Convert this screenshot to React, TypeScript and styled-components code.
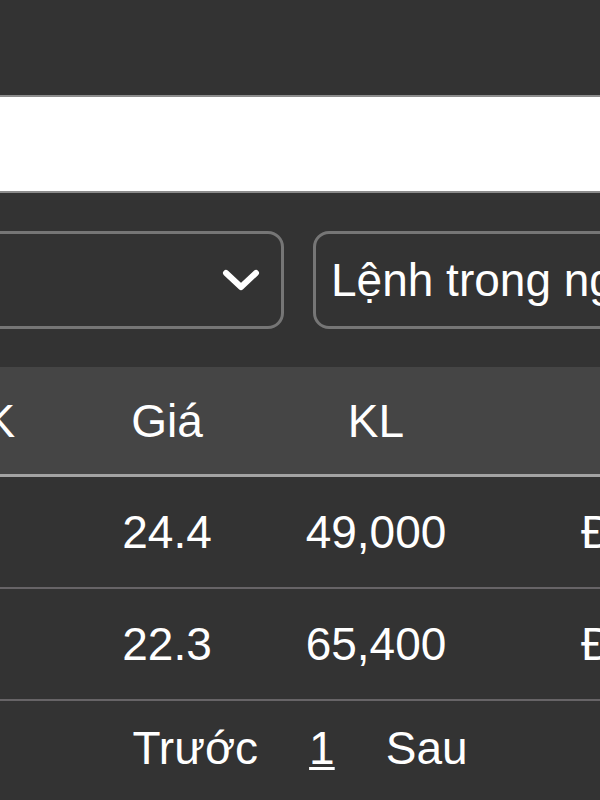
import React, { FC } from 'react';
import styled, { createGlobalStyle } from 'styled-components';

const GlobalStyle = createGlobalStyle`
  html, body {
    margin: 0;
    padding: 0;
    background: #333333;
  }
  body {
    font-family: 'Liberation Sans', Arial, sans-serif;
    color: #ffffff;
  }
`;

const Page = styled.div`
  width: 600px;
  height: 800px;
  overflow: hidden;
  background: #333333;
  display: flex;
  flex-direction: column;
  font-size: 46px;
`;

const TopBar = styled.div`
  height: 95px;
  flex: none;
`;

const SearchBox = styled.div`
  height: 98px;
  flex: none;
  box-sizing: border-box;
  background: #ffffff;
  border-top: 2px solid #8c8c8c;
  border-bottom: 2px solid #8c8c8c;
`;

// the view is a crop of a wider screen, so the content starts left of the edge
const Offset = styled.div`
  margin-left: -220px;
  width: 1040px;
  flex: none;
`;

const FilterRow = styled(Offset)`
  display: flex;
  gap: 29px;
  margin-top: 38px;
`;

const Select = styled.div`
  flex: none;
  width: 504px;
  height: 98px;
  box-sizing: border-box;
  border: 3px solid #767676;
  border-radius: 16px;
  display: flex;
  align-items: center;
  justify-content: space-between;
  padding: 0 21px 0 15px;
  white-space: nowrap;
  overflow: hidden;
`;

const Chevron = () => (
  <svg width="38" height="24" viewBox="0 0 38 24" fill="none">
    <path d="M4 5 L19 19 L34 5" stroke="#ffffff" strokeWidth="6" strokeLinecap="round" strokeLinejoin="round" />
  </svg>
);

const Table = styled(Offset)`
  margin-top: 38px;
`;

const Row = styled.div<{ head?: boolean }>`
  display: grid;
  grid-template-columns: 330px 114px 304px 282px;
  align-items: center;
  height: ${({ head }) => (head ? '110px' : '112px')};
  box-sizing: border-box;
  background: ${({ head }) => (head ? '#454545' : 'transparent')};
  border-bottom: ${({ head }) => (head ? '3px solid #a3a3a3' : '2px solid #676467')};
`;

const Cell = styled.div`
  text-align: center;
  white-space: nowrap;
`;

const Pager = styled.div`
  flex: 1;
  display: flex;
  justify-content: center;
  align-items: center;
  gap: 51px;
  padding-bottom: 6px;
`;

const PageLink = styled.span<{ current?: boolean }>`
  text-decoration: ${({ current }) => (current ? 'underline' : 'none')};
  text-decoration-thickness: 3px;
  text-underline-offset: 3px;
`;

const orders = [
  { code: 'HPG', price: '24.4', volume: '49,000', status: 'Đã khớp' },
  { code: 'HPG', price: '22.3', volume: '65,400', status: 'Đã khớp' },
];

const App: FC = () => (
  <>
    <GlobalStyle />
    <Page>
      <TopBar />
      <SearchBox />
      <FilterRow>
        <Select>
          <span>Tất cả</span>
          <Chevron />
        </Select>
        <Select>
          <span>Lệnh trong ngày</span>
          <Chevron />
        </Select>
      </FilterRow>
      <Table>
        <Row head>
          <Cell>Mã CK</Cell>
          <Cell>Giá</Cell>
          <Cell>KL</Cell>
          <Cell>TT</Cell>
        </Row>
        {orders.map((o, i) => (
          <Row key={i}>
            <Cell>{o.code}</Cell>
            <Cell>{o.price}</Cell>
            <Cell>{o.volume}</Cell>
            <Cell>{o.status}</Cell>
          </Row>
        ))}
      </Table>
      <Pager>
        <PageLink>Trước</PageLink>
        <PageLink current>1</PageLink>
        <PageLink>Sau</PageLink>
      </Pager>
    </Page>
  </>
);

export default App;
